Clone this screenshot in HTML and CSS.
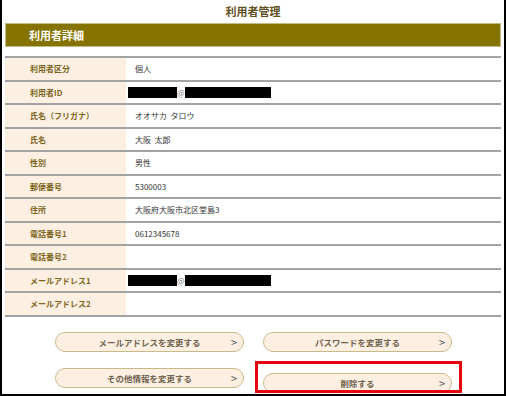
FILE: index.html
```html
<!DOCTYPE html>
<html lang="ja">
<head>
    <meta charset="UTF-8">
    <meta name="viewport" content="width=device-width, initial-scale=1.0">
    <title>利用者管理</title>
    <link rel="stylesheet" href="styles.css">
</head>
<body>
    <div class="frame">
        <h1 class="page-title">利用者管理</h1>

        <h2 class="section-bar">利用者詳細</h2>

        <table class="detail-table">
            <tr><th>利用者区分</th><td>個人</td></tr>
            <tr><th>利用者ID</th><td><span class="mask mask-a"></span><span class="at">@</span><span class="mask mask-b"></span></td></tr>
            <tr><th>氏名（フリガナ）</th><td>オオサカ&nbsp;&nbsp;タロウ</td></tr>
            <tr><th>氏名</th><td>大阪&nbsp;&nbsp;太郎</td></tr>
            <tr><th>性別</th><td>男性</td></tr>
            <tr><th>郵便番号</th><td>5300003</td></tr>
            <tr><th>住所</th><td>大阪府大阪市北区堂島3</td></tr>
            <tr><th>電話番号1</th><td>0612345678</td></tr>
            <tr><th>電話番号2</th><td></td></tr>
            <tr><th>メールアドレス1</th><td><span class="mask mask-a"></span><span class="at">@</span><span class="mask mask-b"></span></td></tr>
            <tr><th>メールアドレス2</th><td></td></tr>
        </table>

        <div class="actions">
            <button class="pill-btn">メールアドレスを変更する<span class="arrow">&gt;</span></button>
            <button class="pill-btn">パスワードを変更する<span class="arrow">&gt;</span></button>
            <button class="pill-btn">その他情報を変更する<span class="arrow">&gt;</span></button>
            <div class="highlight-wrap">
                <button class="pill-btn">削除する<span class="arrow">&gt;</span></button>
                <div class="highlight"></div>
            </div>
        </div>
    </div>
</body>
</html>
```

FILE: styles.css
```css
body {
    margin: 0;
    font-family: "Noto Sans CJK JP", "Noto Sans", sans-serif;
    background-color: #fff;
}

.frame {
    box-sizing: border-box;
    width: 506px;
    height: 396px;
    border-left: 2px solid #000;
    border-right: 2px solid #000;
    border-bottom: 2px solid #000;
    padding: 0 3px;
}

.page-title {
    margin: 0;
    height: 23px;
    line-height: 22px;
    text-align: center;
    font-size: 11px;
    font-weight: bold;
    color: #5f5020;
}

.section-bar {
    box-sizing: border-box;
    margin: 0;
    height: 24px;
    line-height: 22px;
    padding-left: 23px;
    background-color: #857300;
    border: 1px solid #c6bb84;
    color: #fff;
    font-size: 11px;
    font-weight: bold;
}

.detail-table {
    width: 100%;
    margin-top: 9px;
    border-collapse: collapse;
    font-size: 8px;
}

.detail-table tr {
    height: 23.5px;
    border-top: 2px solid #a3a3a3;
}

.detail-table tr:last-child {
    border-bottom: 2px solid #a3a3a3;
}

.detail-table th {
    width: 96px;
    padding: 0 0 0 25px;
    background-color: #fdf0e3;
    color: #7d6622;
    text-align: left;
    font-weight: bold;
}

.detail-table td {
    padding: 0 0 0 9px;
    color: #333;
}

.mask {
    display: inline-block;
    height: 11px;
    background-color: #000;
    vertical-align: middle;
}

.mask-a {
    width: 49px;
    margin-left: -7px;
}

.mask-b {
    width: 86px;
}

.at {
    color: #777;
    font-size: 8px;
    vertical-align: middle;
}

.actions {
    display: grid;
    grid-template-columns: 189px 189px;
    column-gap: 19px;
    row-gap: 16px;
    padding: 15px 0 0 50px;
}

.pill-btn {
    position: relative;
    box-sizing: border-box;
    width: 189px;
    height: 20px;
    padding: 0;
    background-color: #fdf0e3;
    border: 1.5px solid #c9b98a;
    border-radius: 10px;
    font-family: inherit;
    font-size: 8.5px;
    font-weight: bold;
    color: #6f6350;
    cursor: pointer;
}

.arrow {
    position: absolute;
    right: 6px;
    top: 1px;
    font-size: 11px;
    font-weight: normal;
    color: #555;
}

.highlight-wrap {
    position: relative;
}

.highlight {
    position: absolute;
    left: -8px;
    top: -7px;
    width: 207px;
    height: 32px;
    box-sizing: border-box;
    border: 3px solid #e8000e;
}
```
